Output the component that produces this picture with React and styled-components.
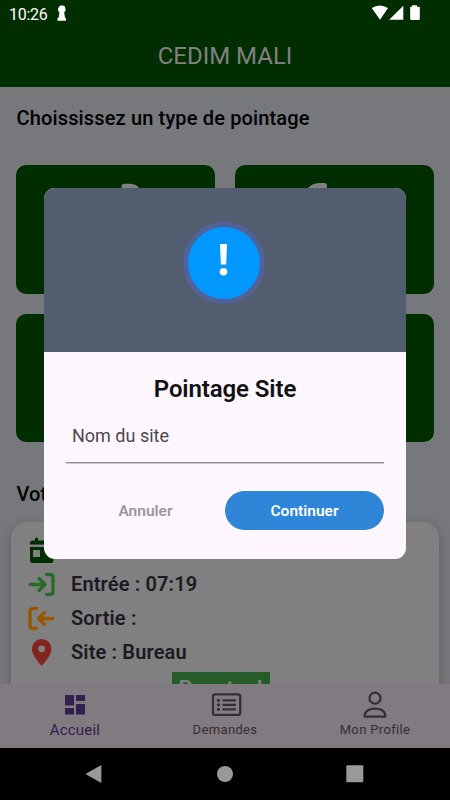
import React from "react";
import styled, { createGlobalStyle } from "styled-components";

const Global = createGlobalStyle`
  * { box-sizing: border-box; }
  body { margin: 0; background: #000; font-family: Roboto, sans-serif; }
`;
const Phone = styled.div`
  position: relative; width: 450px; height: 800px; overflow: hidden;
  display: flex; flex-direction: column; background: #77787c;
`;
const Header = styled.header`
  height: 87px; flex: none; background: #002e00; display: flex; flex-direction: column;
`;
const StatusBar = styled.div`
  height: 27px; padding: 0 29px 0 9px; display: flex; align-items: center; color: #fff;
`;
const Clock = styled.span`
  font-size: 16px; line-height: 27px; letter-spacing: -0.3px; width: 48px; padding-top: 1px; white-space: nowrap;
`;
const StatusIcons = styled.div`margin-left: auto; height: 27px; display: flex;`;
const AppTitle = styled.h1`
  margin: 14px 0 0; font-size: 24px; line-height: 30px; font-weight: 400; text-align: center; color: #808080;
`;
const Content = styled.main`
  height: 597px; flex: none; overflow: hidden; display: flex; flex-direction: column;
`;
const SectionTitle = styled.h2`
  margin: ${p => p.$top}px 0 0 16.5px; font-size: 20px; line-height: 24px; font-weight: 500;
  color: #000; letter-spacing: 0.15px; white-space: nowrap;
`;
const TileGrid = styled.div`
  margin: 35px 16.5px 0 16px; display: grid; grid-template-columns: 1fr 1fr; gap: 20px;
  grid-auto-rows: 128.5px;
`;
const Tile = styled.div`
  background: #002e00; border-radius: 10px; display: flex; justify-content: center; padding-top: 18px;
`;
const Card = styled.section`
  margin: 16px 11px 0; height: 240px; flex: none; padding: 11px 16px; border-radius: 16px;
  background: #808080; box-shadow: 0 4px 12px rgba(40, 45, 55, 0.35);
  display: flex; flex-direction: column;
`;
const Row = styled.div`
  height: 34px; flex: none; display: flex; align-items: center; gap: 14px;
`;
const RowIcon = styled.svg`width: 30px; height: 34px; flex: none;`;
const RowText = styled.span`
  font-size: 20px; line-height: 24px; font-weight: 600; letter-spacing: 0.15px; color: #1c1a22;
`;
const Badge = styled.div`
  width: 98px; height: 36px; margin: 3px 0 0 144.5px; flex: none; background: #265c28; color: #808080;
  text-align: center; font-size: 21px; line-height: 33px; font-weight: 700;
`;
const TabBar = styled.nav`
  height: 64px; flex: none; background: #817a80; display: grid; grid-template-columns: repeat(3, 1fr);
`;
const Tab = styled.div`
  display: flex; flex-direction: column; align-items: center;
  color: ${p => p.$active ? "#30214f" : "#323034"};
  font-size: ${p => p.$active ? 15 : 13}px; letter-spacing: ${p => p.$active ? 0.2 : 0.35}px;
  svg { width: 34px; height: 36px; margin-top: 3px; }
  span { line-height: 16px; margin-top: -1px; }
`;
const SystemBar = styled.div`
  height: 52px; flex: none; background: #000; display: flex; justify-content: space-around;
  align-items: center; padding: 0 28px;
`;
const Overlay = styled.div`
  position: absolute; inset: 0; display: flex; justify-content: center; align-items: flex-start; padding-top: 188px;
`;
const Dialog = styled.div`
  width: 362px; height: 371px; border-radius: 11px; overflow: hidden; background: #fef7ff;
`;
const DialogTop = styled.div`
  height: 164px; background: #525d6f; display: flex; justify-content: center; padding-top: 34px;
`;
const Alert = styled.div`
  width: 82px; height: 82px; margin-right: 2px; border-radius: 50%; border: 5px solid #51629b; background: #0098ff;
  svg { display: block; width: 72px; height: 72px; }
`;
const DialogBody = styled.div`padding: 22px 22px 0;`;
const DialogTitle = styled.h3`
  margin: 0; text-align: center; font-size: 24px; line-height: 30px; font-weight: 600; letter-spacing: -0.1px; color: #111013;
`;
const Field = styled.div`
  height: 59px; border-bottom: 1px solid #8f8a91; box-shadow: 0 1px #cfc9d0; padding: 20px 6px 0;
  font-size: 18px; line-height: 24px; color: #4b484e;
`;
const Actions = styled.div`margin-top: 28px; display: grid; grid-template-columns: 1fr 1fr;`;
const Button = styled.button`
  height: 39px; padding: 1px 0 0; border: 0; border-radius: 20px; font: 600 15.5px/38px Roboto, sans-serif;
  background: ${p => p.$primary ? "#2f86d8" : "transparent"};
  color: ${p => p.$primary ? "#fff" : "#9b989d"};
`;

export default function App() {
  return (
    <>
      <Global />
      <Phone>
        <Header>
          <StatusBar>
            <Clock>10:26</Clock>
            <svg width="10" height="27" viewBox="0 0 10 27" fill="#fff"><path d="M2.5 6.3 3.4 5.4H6L7.7 6.3 8.5 8.4V10.6L7.2 12.5 8 17.5 9 18.3V20.7H.5V18.3L1.7 17.5 2.4 12.5 1.1 10.5V8.2Z" /></svg>
            <StatusIcons>
              <svg width="50" height="27" viewBox="371 0 50 27" fill="#fff">
                <path d="M371.7 8Q379.8 2.8 388 8L380 19.7ZM403.3 5.7V19.8H389.2ZM412 6V5.2H417V6.7H419.8V19Q419.8 20 418.8 20H411.2Q410.2 20 410.2 19V6.7H412Z" />
              </svg>
            </StatusIcons>
          </StatusBar>
          <AppTitle>CEDIM MALI</AppTitle>
        </Header>
        <Content>
          <SectionTitle $top={19}>Choississez un type de pointage</SectionTitle>
          <TileGrid>
            <Tile><svg width="60" height="80" viewBox="0 0 60 80" fill="#808080"><path d="M36.5 7V3.5Q36.5 .8 39.2 .8H45Q51.5 .8 56 7Z" /></svg></Tile>
            <Tile><svg width="54" height="80" viewBox="0 0 54 80" fill="#808080"><path d="M0 6Q5 0 12 0H17.5Q20 0 20 2.5V6Z" /></svg></Tile>
            <Tile /><Tile />
          </TileGrid>
          <SectionTitle $top={40}>Votre pointage</SectionTitle>
          <Card>
            <Row>
              <RowIcon viewBox="0 0 30 34"><g transform="translate(0 2)"><path fill="#002e00" d="M3 9.5V8Q3 5.5 5.5 5.5H8V4Q8 2.5 9.5 2.5T11 4V5.5H19V4Q19 2.5 20.5 2.5T22 4V5.5H24Q26.5 5.5 26.5 8V9.5ZM3 12H26.5V25Q26.5 28 24 28H5.5Q3 28 3 25Z" /><path fill="#808080" d="M6 15H13V22H6Z" /></g></RowIcon>
            </Row>
            <Row>
              <RowIcon viewBox="0 0 30 34" fill="none" stroke="#276b2a" strokeWidth="3.3" strokeLinecap="round" strokeLinejoin="round"><path d="M3 17.5H17M12 11.5L18 17.5 12 23.5M19.5 7.5H23Q26 7.5 26 10.5V24.5Q26 27.5 23 27.5H19.5" /></RowIcon>
              <RowText>Entrée : 07:19</RowText>
            </Row>
            <Row>
              <RowIcon viewBox="0 0 30 34" fill="none" stroke="#965604" strokeWidth="3.3" strokeLinecap="round" strokeLinejoin="round"><path d="M26 17.5H12M17.5 11.5L11.5 17.5 17.5 23.5M9.5 7.5H6Q3 7.5 3 10.5V24.5Q3 27.5 6 27.5H9.5" /></RowIcon>
              <RowText>Sortie :</RowText>
            </Row>
            <Row>
              <RowIcon viewBox="0 0 30 34"><path fill="#84241f" fillRule="evenodd" d="M14.7 4A9.8 9.8 0 0 0 4.9 14C4.9 19 10.3 26 13.3 29.6Q14.7 31.2 16.1 29.6C19 26 24.5 19 24.5 14A9.8 9.8 0 0 0 14.7 4ZM14.7 10.4A3.4 3.4 0 1 1 14.7 17.2A3.4 3.4 0 1 1 14.7 10.4Z" /></RowIcon>
              <RowText>Site : Bureau</RowText>
            </Row>
            <Badge>Ponctuel</Badge>
          </Card>
        </Content>
        <TabBar>
          <Tab $active><svg viewBox="0 0 34 36" fill="currentColor"><path d="M7 8H16V18.5H7ZM18 8H27V14H18ZM18 17H27V27.5H18ZM7 21H16V27.5H7Z" /></svg><span>Accueil</span></Tab>
          <Tab><svg viewBox="0 0 34 36" fill="none" stroke="currentColor" strokeWidth="2.2"><rect x="5" y="7.3" width="27.2" height="20.6" rx="2" /><path d="M14.5 13.3H28M14.5 17.8H28M14.5 22.3H28" /><path strokeWidth="3.2" strokeLinecap="round" d="M10.4 13.3H10.5M10.4 17.8H10.5M10.4 22.3H10.5" /></svg><span>Demandes</span></Tab>
          <Tab><svg viewBox="0 0 34 36" fill="none" stroke="currentColor" strokeWidth="2.2" strokeLinejoin="round"><circle cx="17" cy="11.2" r="5.5" /><path d="M6.7 29.7V28Q8 21.6 17 21.6T27.3 28V29.7Z" /></svg><span>Mon Profile</span></Tab>
        </TabBar>
        <SystemBar>
          <svg width="24" height="24" viewBox="0 0 24 24" fill="#999"><path d="M3.4 12 18.4 3.5Q19.4 3 19.4 4V20Q19.4 21 18.4 20.5Z" /></svg>
          <svg width="24" height="24" viewBox="0 0 24 24" fill="#999"><circle cx="12" cy="12" r="8" /></svg>
          <svg width="24" height="24" viewBox="0 0 24 24" fill="#999"><rect x="2.3" y="3.3" width="17" height="17" rx="1" /></svg>
        </SystemBar>
        <Overlay>
          <Dialog>
            <DialogTop><Alert><svg viewBox="0 0 72 72" fill="#fff"><path d="M32 17H39L38.2 37.5H32.9Z" /><circle cx="35.5" cy="44.8" r="3.8" /></svg></Alert></DialogTop>
            <DialogBody>
              <DialogTitle>Pointage Site</DialogTitle>
              <Field>Nom du site</Field>
              <Actions><Button>Annuler</Button><Button $primary>Continuer</Button></Actions>
            </DialogBody>
          </Dialog>
        </Overlay>
      </Phone>
    </>
  );
}
